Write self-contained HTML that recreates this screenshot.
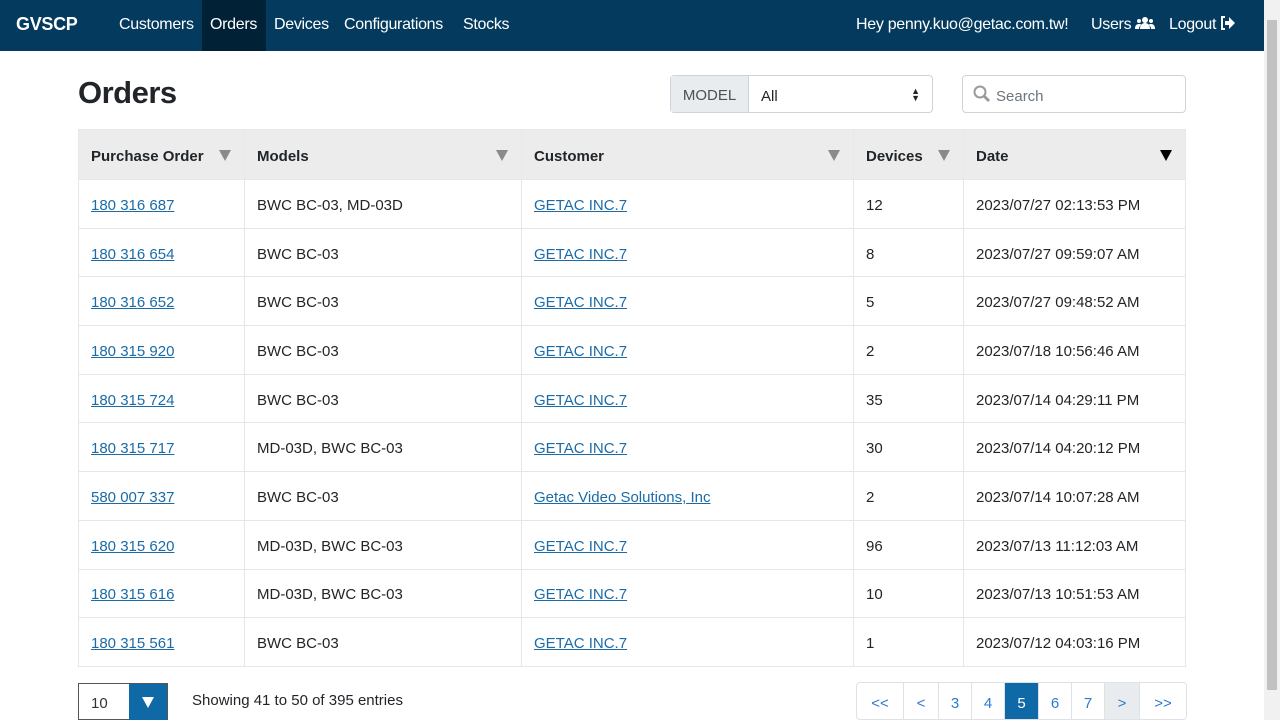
<!DOCTYPE html>
<html><head><meta charset="utf-8"><style>
*{box-sizing:border-box}
body{margin:0;width:1280px;height:720px;overflow:hidden;font-family:"Liberation Sans",sans-serif;font-size:15px;color:#212529;background:#fff;position:relative}
.nav{position:absolute;left:0;top:0;width:1264px;height:51px;background:#033a5d;color:#fff}
.nav span{position:absolute;top:16px;font-size:16px;letter-spacing:-0.3px}
.brand{font-weight:bold;font-size:18px!important;top:14px!important;left:16px}
.act{position:absolute;left:202px;top:0;width:64px;height:51px;background:#012236}
.sb{position:absolute;right:0;top:0;width:16px;height:720px;background:#f1f1f1}
.sb .th{position:absolute;left:3px;top:20px;width:10px;height:670px;background:#c1c1c1}
h1{position:absolute;left:78px;top:75px;margin:0;font-size:31px;font-weight:bold;letter-spacing:-0.5px}
.sel{position:absolute;left:670px;top:75px;width:263px;height:38px;border:1px solid #ced4da;border-radius:4px;background:#fff}
.sel .lab{position:absolute;left:0;top:0;width:78px;height:36px;background:#e9ecef;border-right:1px solid #ced4da;color:#495057;font-size:15px;line-height:40px;text-align:center}
.sel .v{position:absolute;left:90px;top:12px;font-size:15px}
.search{position:absolute;left:962px;top:75px;width:224px;height:38px;border:1px solid #ced4da;border-radius:4px;color:#6c757d;font-size:15px}
table{position:absolute;left:78px;top:129px;width:1107px;border-collapse:collapse;table-layout:fixed}
th,td{border:1px solid #e6e6e6;padding:3px 12px 0;text-align:left;white-space:nowrap}
th{height:50px;background:#ececec;font-weight:bold;position:relative;border-color:#e8e8e8}
td{height:48.7px}
a{color:#1a6ba8;text-decoration:underline}
.ar{position:absolute;right:13px;top:20px;width:0;height:0;border-left:6px solid transparent;border-right:6px solid transparent;border-top:11px solid #8a8a8a}
.ar.b{border-top-color:#000}
.pp{position:absolute;left:78px;top:683px;width:90px;height:37px;border:1px solid #555}
.pp .n{position:absolute;left:12px;top:11px;color:#333}
.pp .d{position:absolute;right:0;top:0;width:38px;height:36px;background:#0f69a6}
.pp .d:after{content:"";position:absolute;left:13px;top:13px;border-left:6px solid transparent;border-right:6px solid transparent;border-top:11px solid #fff}
.info{position:absolute;left:192px;top:692px}
.pg{position:absolute;left:856px;top:682px;height:38px;display:flex;border:1px solid #dee2e6;border-radius:4px;overflow:hidden}
.pg div{border-right:1px solid #dee2e6;height:38px;line-height:42px;text-align:center;color:#2a7bd0;font-size:15px}
</style></head><body>
<div class="nav"><div class="act"></div>
<span class="brand">GVSCP</span>
<span style="left:119px">Customers</span><span style="left:210px">Orders</span><span style="left:274px">Devices</span><span style="left:344px">Configurations</span><span style="left:463px">Stocks</span>
<span style="left:856px">Hey penny.kuo@getac.com.tw!</span><span style="left:1091px">Users <svg width="20" height="14" viewBox="0 0 20 14" style="vertical-align:-1px"><circle cx="10" cy="4" r="3" fill="#fff"/><circle cx="4" cy="5" r="2" fill="#fff"/><circle cx="16" cy="5" r="2" fill="#fff"/><path d="M5 13c0-4 2-6 5-6s5 2 5 6zM0 13c0-3 1-5 4-5 1 0 2 0 2 1-1 1-2 2-2 4zM20 13c0-3-1-5-4-5-1 0-2 0-2 1 1 1 2 2 2 4z" fill="#fff"/></svg></span>
<span style="left:1169px">Logout <svg width="15" height="14" viewBox="0 0 15 14" style="vertical-align:-1px"><path d="M5 1H2v12h3" stroke="#fff" stroke-width="2" fill="none"/><path d="M5 5h4V1l6 6-6 6V9H5z" fill="#fff"/></svg></span>
</div>
<div class="sb"><div class="th"></div></div>
<h1>Orders</h1>
<div class="sel"><div class="lab">MODEL</div><div class="v">All</div><div style="position:absolute;right:12px;top:12px;font-size:9px;line-height:7px">▲<br>▼</div></div>
<div class="search"><svg width="18" height="18" viewBox="0 0 18 18" style="position:absolute;left:10px;top:9px"><circle cx="7" cy="7" r="5.5" stroke="#9a9a9a" stroke-width="2" fill="none"/><path d="M11 11l5 5" stroke="#9a9a9a" stroke-width="3"/></svg><span style="position:absolute;left:33px;top:12px">Search</span></div>
<table>
<colgroup><col style="width:166px"><col style="width:277px"><col style="width:332px"><col style="width:110px"><col style="width:222px"></colgroup>
<tr><th>Purchase Order<i class="ar"></i></th><th>Models<i class="ar"></i></th><th>Customer<i class="ar"></i></th><th>Devices<i class="ar"></i></th><th>Date<i class="ar b"></i></th></tr>
<tr><td><a>180 316 687</a></td><td>BWC BC-03, MD-03D</td><td><a>GETAC INC.7</a></td><td>12</td><td>2023/07/27 02:13:53 PM</td></tr>
<tr><td><a>180 316 654</a></td><td>BWC BC-03</td><td><a>GETAC INC.7</a></td><td>8</td><td>2023/07/27 09:59:07 AM</td></tr>
<tr><td><a>180 316 652</a></td><td>BWC BC-03</td><td><a>GETAC INC.7</a></td><td>5</td><td>2023/07/27 09:48:52 AM</td></tr>
<tr><td><a>180 315 920</a></td><td>BWC BC-03</td><td><a>GETAC INC.7</a></td><td>2</td><td>2023/07/18 10:56:46 AM</td></tr>
<tr><td><a>180 315 724</a></td><td>BWC BC-03</td><td><a>GETAC INC.7</a></td><td>35</td><td>2023/07/14 04:29:11 PM</td></tr>
<tr><td><a>180 315 717</a></td><td>MD-03D, BWC BC-03</td><td><a>GETAC INC.7</a></td><td>30</td><td>2023/07/14 04:20:12 PM</td></tr>
<tr><td><a>580 007 337</a></td><td>BWC BC-03</td><td><a>Getac Video Solutions, Inc</a></td><td>2</td><td>2023/07/14 10:07:28 AM</td></tr>
<tr><td><a>180 315 620</a></td><td>MD-03D, BWC BC-03</td><td><a>GETAC INC.7</a></td><td>96</td><td>2023/07/13 11:12:03 AM</td></tr>
<tr><td><a>180 315 616</a></td><td>MD-03D, BWC BC-03</td><td><a>GETAC INC.7</a></td><td>10</td><td>2023/07/13 10:51:53 AM</td></tr>
<tr><td><a>180 315 561</a></td><td>BWC BC-03</td><td><a>GETAC INC.7</a></td><td>1</td><td>2023/07/12 04:03:16 PM</td></tr>
</table>
<div class="pp"><span class="n">10</span><div class="d"></div></div>
<div class="info">Showing 41 to 50 of 395 entries</div>
<div class="pg"><div style="width:47px">&lt;&lt;</div><div style="width:35px">&lt;</div><div style="width:33px">3</div><div style="width:33px">4</div><div style="width:34px;background:#0f69a6;color:#fff">5</div><div style="width:33px">6</div><div style="width:33px">7</div><div style="width:35px;background:#e9ecef">&gt;</div><div style="width:46px;border-right:0">&gt;&gt;</div></div>
</body></html>
